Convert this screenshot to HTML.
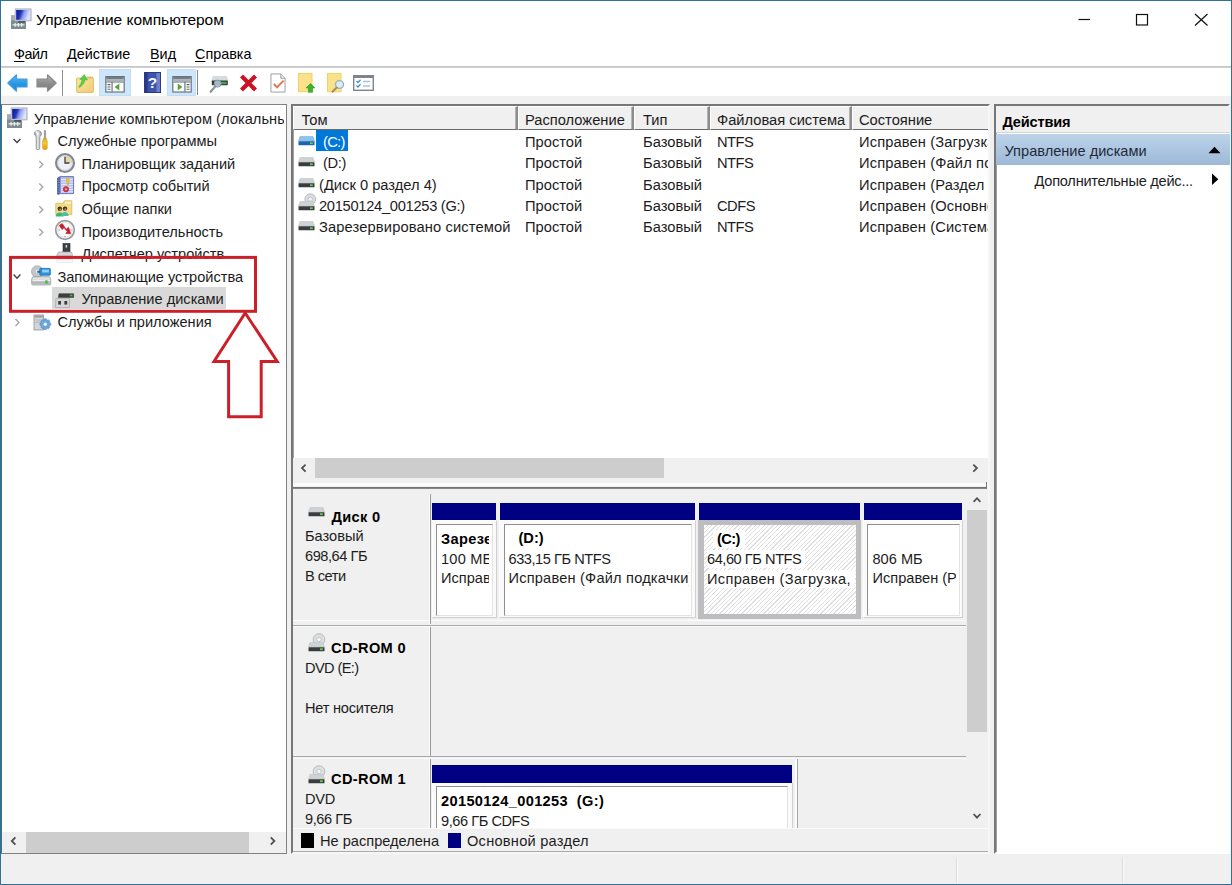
<!DOCTYPE html>
<html lang="ru">
<head>
<meta charset="utf-8">
<title>Управление компьютером</title>
<style>
*{box-sizing:border-box;margin:0;padding:0}
html,body{width:1232px;height:885px;overflow:hidden;background:#fff}
body{font-family:"Liberation Sans",sans-serif;font-size:14.6px;color:#1c1c1c;position:relative}
.abs{position:absolute}
svg{position:absolute;overflow:visible}
.t{position:absolute;white-space:nowrap;line-height:18px;height:18px}
.b{font-weight:bold;color:#000;letter-spacing:.35px}
.n{letter-spacing:-.45px}
#win{position:absolute;left:0;top:0;width:1232px;height:885px;background:#fff;overflow:hidden}
#frame{position:absolute;left:0;top:0;width:1232px;height:885px;border:1px solid #2f7299;z-index:50}
#title{left:36px;top:10.5px;font-size:15.5px;color:#000}
.menu{top:44.8px;color:#000;font-size:14.4px}
.menu u{text-decoration:underline;text-underline-offset:2px}
#menuline{left:1px;top:66px;width:1230px;height:2px;background:linear-gradient(#c2c2c2,#d6d6d6)}
#toolbar{left:1px;top:68px;width:1230px;height:28px;background:#fff}
#client{left:1px;top:96px;width:1230px;height:788px;background:#f0f0f0}
.hl{position:absolute;top:69px;height:27px;background:#cde6f9;border:1px solid #c3def5}
#tbsep{left:62px;top:70px;width:1px;height:26px;background:#8e8e8e}
/* panes */
#tree{left:1px;top:104px;width:286px;height:750px;background:#fff;border:1px solid #828282;border-left-color:#3f6f8c;overflow:hidden}
#main{left:291px;top:104px;width:699px;height:750px;background:#fff;border:2px solid;border-color:#777 #f6f6f6 #f6f6f6 #777;box-shadow:inset 1px 1px 0 #a2a2a2;overflow:hidden}
#actions{left:994px;top:104px;width:235.5px;height:750px;background:#fff;border:2px solid;border-color:#777 #fff #fff #777;box-shadow:inset 1px 1px 0 #a2a2a2;overflow:hidden}

.clip{position:absolute;overflow:hidden}
.pg{position:absolute;width:1232px;height:885px}
.tr{font-size:14.6px}
.sel{position:absolute;background:#d9d9d9}

.hd{position:absolute;top:106px;height:24px;background:#f0f0f0;border-top:1px solid #fff;border-left:1px solid #fff;border-right:2px solid;border-right-color:#8c8c8c;border-bottom:1px solid #6b6b6b;box-shadow:inset -1px 0 0 #b5b5b5}
.hdt{top:111px;font-size:14.7px}
.lv{font-size:14.7px}
.sb{position:absolute;background:#f0f0f0}
.thumb{position:absolute;background:#cdcdcd}

.gp{font-size:14.6px;line-height:18px}
.navy{position:absolute;background:#000082;height:17.5px;top:502.5px}
.cell{position:absolute;background:#fff;border:1px solid;border-color:#8f8f8f #e3e3e3 #e3e3e3 #8f8f8f}
.cellout{position:absolute;background:#fafafa;border:1px solid;border-color:#fff #d0d0d0 #d0d0d0 #fff}
.hline{position:absolute;height:1px;background:#a8a8a8}
.vline{position:absolute;width:1px;background:#9a9a9a}
</style>
</head>
<body>
<div id="win">
<!-- ===== TITLE BAR ===== -->
  <svg id="appicon" style="left:10px;top:8px" width="22" height="22" viewBox="0 0 22 22">
    <defs><linearGradient id="scrG" x1="0" y1="0" x2="1" y2="0.25"><stop offset="0" stop-color="#0a1698"/><stop offset=".38" stop-color="#2334b8"/><stop offset=".62" stop-color="#8e9df0"/><stop offset="1" stop-color="#dfe4fb"/></linearGradient></defs>
    <rect x="1" y="7.5" width="15" height="13.5" fill="#7c8b8e"/>
    <rect x="1" y="7.5" width="15" height="5" fill="#a3aeaa"/>
    <rect x="2.5" y="16" width="12" height="1.6" fill="#cfd6d7"/>
    <rect x="4.5" y="15" width="1.2" height="3.8" fill="#eef1f1"/><rect x="7.8" y="15" width="1.2" height="3.8" fill="#eef1f1"/><rect x="11.1" y="15" width="1.2" height="3.8" fill="#eef1f1"/>
    <rect x="8" y="12.6" width="7" height="1.8" fill="#2c3340"/>
    <rect x="5" y=".8" width="16.2" height="12.2" fill="#c3c8d8" stroke="#aab0c4" stroke-width=".6"/>
    <rect x="6.2" y="2" width="13.8" height="9.8" fill="url(#scrG)"/>
  </svg>
  <div class="t" id="title">Управление компьютером</div>
  <svg style="left:1070px;top:8px" width="150" height="24" viewBox="0 0 150 24">
    <path d="M8.5 11.5 H20" stroke="#111" stroke-width="1.2" fill="none"/>
    <rect x="66.5" y="6.5" width="11" height="10.5" stroke="#111" stroke-width="1.2" fill="none"/>
    <path d="M125 6 L137.5 17.5 M137.5 6 L125 17.5" stroke="#111" stroke-width="1.2" fill="none"/>
  </svg>
<!-- ===== MENU ===== -->
  <div class="t menu" style="left:14px;letter-spacing:-.5px"><u>Ф</u>айл</div>
  <div class="t menu" style="left:67px"><u>Д</u>ействие</div>
  <div class="t menu" style="left:150px"><u>В</u>ид</div>
  <div class="t menu" style="left:195px"><u>С</u>правка</div>
  <div class="abs" id="menuline"></div>
<!-- ===== TOOLBAR ===== -->
  <div class="abs" id="toolbar"></div>
  <div class="abs" id="client"></div>
  <div class="hl" style="left:99px;width:32px"></div>
  <div class="hl" style="left:167px;width:29px"></div>
  <div class="abs" style="left:197px;top:70px;width:1px;height:25px;background:#7f8a93"></div>
  <div class="abs" id="tbsep"></div>

  <!-- back arrow -->
  <svg style="left:7px;top:74px" width="21" height="18" viewBox="0 0 21 18">
    <defs><linearGradient id="gb" x1="0" y1="0" x2="0" y2="1"><stop offset="0" stop-color="#5db8f0"/><stop offset=".5" stop-color="#2a9be8"/><stop offset="1" stop-color="#1c7fd0"/></linearGradient>
    <linearGradient id="gg" x1="0" y1="0" x2="0" y2="1"><stop offset="0" stop-color="#b4b4b4"/><stop offset=".5" stop-color="#8e8e8e"/><stop offset="1" stop-color="#7a7a7a"/></linearGradient></defs>
    <path d="M9.5 0.8 L0.8 9 L9.5 17.2 L9.5 13 L20 13 L20 5 L9.5 5 Z" fill="url(#gb)" stroke="#4a9bdc" stroke-width="1.2" stroke-linejoin="round"/>
  </svg>
  <!-- forward arrow -->
  <svg style="left:36px;top:74px" width="21" height="18" viewBox="0 0 21 18">
    <path d="M11.5 0.8 L20.2 9 L11.5 17.2 L11.5 13 L1 13 L1 5 L11.5 5 Z" fill="url(#gg)" stroke="#8a8a8a" stroke-width="1.2" stroke-linejoin="round"/>
  </svg>
  <!-- folder up -->
  <svg style="left:76px;top:73px" width="19" height="20" viewBox="0 0 19 20">
    <defs><linearGradient id="fg" x1="0" y1="0" x2="1" y2="1"><stop offset="0" stop-color="#f9e79c"/><stop offset="1" stop-color="#f2ca78"/></linearGradient></defs>
    <path d="M10.5 5 L11.8 3.4 H16.3 L17.3 5 Z" fill="#e6c46c"/>
    <rect x=".6" y="5" width="16.8" height="14.4" rx=".8" fill="url(#fg)" stroke="#d9b961" stroke-width=".9"/>
    <path d="M2.6 13.8 C4.6 11.6 5.6 9.2 6.1 6.7 L3.9 6.4 L8.2 1.4 L11.6 7 L9.1 6.8 C8.3 10.2 6.2 12.7 3.7 14.5 Z" fill="#5bcb4d" stroke="#48b03c" stroke-width=".5"/>
  </svg>
  <!-- show/hide tree -->
  <svg style="left:104.8px;top:76px" width="20" height="16.6" viewBox="0 0 20 17">
    <rect x=".6" y=".6" width="18.8" height="15.8" fill="#fff" stroke="#66717d" stroke-width="1.2"/>
    <rect x="1" y="1" width="18" height="2.6" fill="#737d88"/>
    <rect x="1" y="3.6" width="18" height="2.2" fill="#aab3b5"/>
    <rect x="1" y="5.8" width="18" height=".9" fill="#66717d"/>
    <rect x="6.4" y="6" width="1.2" height="10" fill="#66717d"/>
    <path d="M2.3 8.8h3M2.3 11.2h3M2.3 13.6h3" stroke="#56616d" stroke-width="1.1"/>
    <path d="M14.4 7.8 V14.8 L9.6 11.3 Z" fill="#58a43a"/>
  </svg>
  <!-- help -->
  <svg style="left:143.5px;top:72px" width="17" height="21" viewBox="0 0 17 21">
    <rect x=".5" y=".5" width="16" height="20" fill="#3e54ab" stroke="#2a3a86"/>
    <rect x="1" y="1" width="2.6" height="19" fill="#2a3a86"/>
    <rect x="12.5" y="1" width="3.5" height="19" fill="#6d80cb"/>
    <text x="8.6" y="15.8" font-family="Liberation Sans,sans-serif" font-weight="bold" font-size="15.5" fill="#f4f6ff" text-anchor="middle">?</text>
  </svg>
  <!-- show/hide action pane -->
  <svg style="left:172px;top:76px" width="20" height="16.6" viewBox="0 0 20 17">
    <rect x=".6" y=".6" width="18.8" height="15.8" fill="#fff" stroke="#66717d" stroke-width="1.2"/>
    <rect x="1" y="1" width="18" height="2.6" fill="#737d88"/>
    <rect x="1" y="3.6" width="18" height="2.2" fill="#aab3b5"/>
    <rect x="1" y="5.8" width="18" height=".9" fill="#66717d"/>
    <rect x="12.4" y="6" width="1.2" height="10" fill="#66717d"/>
    <path d="M14.7 8.8h3M14.7 11.2h3M14.7 13.6h3" stroke="#56616d" stroke-width="1.1"/>
    <path d="M5.6 7.8 V14.8 L10.4 11.3 Z" fill="#58a43a"/>
  </svg>
  <!-- drive + magnifier -->
  <svg style="left:209px;top:74px" width="21" height="19" viewBox="0 0 21 19">
    <path d="M4 2.4 H17.5 L18.8 6.6 H2.8 Z" fill="#d7dbde" stroke="#c3c8cc" stroke-width=".5"/>
    <rect x="2.8" y="6.6" width="16" height="4.6" rx=".6" fill="#2b3932"/>
    <rect x="11.6" y="7.7" width="6" height="2.5" fill="#44a546"/>
    <circle cx="8.6" cy="9.6" r="3.5" fill="#a9c3d8" fill-opacity=".92" stroke="#8794a0" stroke-width="1"/>
    <path d="M6.3 12.4 L1.6 17.8" stroke="#8a8f94" stroke-width="2.1" stroke-linecap="round"/>
  </svg>
  <!-- red X -->
  <svg style="left:239px;top:74px" width="19" height="18" viewBox="0 0 19 18">
    <path d="M2.5 2 L16.5 16 M16.5 2 L2.5 16" stroke="#cc1220" stroke-width="4.2" stroke-linecap="butt"/>
  </svg>
  <!-- properties doc -->
  <svg style="left:269.5px;top:73px" width="16" height="20" viewBox="0 0 17 21" preserveAspectRatio="none">
    <path d="M1 1 H11.5 L16 5.5 V20 H1 Z" fill="#fff" stroke="#9a9a9a" stroke-width="1"/>
    <path d="M11.5 1 V5.5 H16" fill="#e8e8e8" stroke="#9a9a9a" stroke-width="1"/>
    <path d="M4 11.5 L7.5 15 L14.5 8" fill="none" stroke="#e2785a" stroke-width="2"/>
  </svg>
  <!-- export up -->
  <svg style="left:298px;top:72.8px" width="18" height="20.2" viewBox="0 0 18 21" preserveAspectRatio="none">
    <rect x=".5" y=".5" width="13.5" height="19" fill="#fbe28a" stroke="#f1d16a"/>
    <path d="M12.5 11 L17 15.5 H14.6 V20 H10.4 V15.5 H8 Z" fill="#3ab52c" stroke="#2a9420" stroke-width=".6"/>
  </svg>
  <!-- find -->
  <svg style="left:327px;top:72.8px" width="19" height="20.2" viewBox="0 0 19 21" preserveAspectRatio="none">
    <rect x=".5" y=".5" width="13.5" height="19" fill="#fbe28a" stroke="#f1d16a"/>
    <circle cx="12.5" cy="12" r="4" fill="#d9eef5" stroke="#9ab0bb" stroke-width="1.4"/>
    <path d="M9.8 15 L5.5 19.5" stroke="#a08e66" stroke-width="2" stroke-linecap="round"/>
  </svg>
  <!-- checklist -->
  <svg style="left:353px;top:75px" width="21" height="16" viewBox="0 0 21 16">
    <rect x=".7" y=".7" width="19.6" height="14.6" fill="#fff" stroke="#7e848c" stroke-width="1.4"/>
    <rect x="1" y="1" width="19" height="2" fill="#7e848c"/>
    <path d="M3.5 6 L5 7.5 L7.5 4.8 M3.5 10.5 L5 12 L7.5 9.3" fill="none" stroke="#3a8fd6" stroke-width="1.3"/>
    <path d="M10 6.5 H17 M10 11 H17" stroke="#a7c3e0" stroke-width="1.4"/>
  </svg>

<!-- ===== PANES ===== -->
  <div class="abs" id="tree">
  <!--TREE-->
  </div>
  <div class="abs" id="main">
  <!--MAIN-->
  </div>
  <div class="abs" id="actions">
  </div>

  <div class="clip" style="left:2px;top:105px;width:284px;height:748px"><div class="pg" style="left:-2px;top:-105px">
    <div class="sel" style="left:52px;top:287px;width:174px;height:22px"></div>
    <div class="sb" style="left:2px;top:832px;width:284px;height:21px"></div>
    <div class="thumb" style="left:25.5px;top:832px;width:223px;height:20.5px"></div>
    <svg style="left:5px;top:832px" width="281" height="21" viewBox="0 0 281 21">
      <path d="M10.4 5.4 L6.8 9 L10.4 12.6" fill="none" stroke="#505050" stroke-width="1.8"/>
      <path d="M265.8 5.4 L269.4 9 L265.8 12.6" fill="none" stroke="#505050" stroke-width="1.8"/>
    </svg>
    <!-- row texts -->
    <div class="t tr" style="left:34px;top:109.5px;width:250.2px;overflow:hidden;letter-spacing:.05px">Управление компьютером (локальный)</div>
    <div class="t tr" style="left:57.4px;top:132.1px">Служебные программы</div>
    <div class="t tr" style="left:81.5px;top:154.7px">Планировщик заданий</div>
    <div class="t tr" style="left:81.5px;top:177.3px">Просмотр событий</div>
    <div class="t tr" style="left:81.5px;top:199.9px">Общие папки</div>
    <div class="t tr" style="left:81.5px;top:222.5px">Производительность</div>
    <div class="t tr" style="left:81.5px;top:245.1px">Диспетчер устройств</div>
    <div class="t tr" style="left:57.4px;top:267.7px">Запоминающие устройства</div>
    <div class="t tr" style="left:81.5px;top:290.3px">Управление дисками</div>
    <div class="t tr" style="left:57.4px;top:312.9px">Службы и приложения</div>
    <!-- chevrons -->
    <svg style="left:0;top:0" width="60" height="340" viewBox="0 0 60 340">
      <g fill="none" stroke="#404040" stroke-width="1.4">
        <path d="M13.6 139 L17 142.6 L20.4 139"/>
        <path d="M13.6 274.6 L17 278.2 L20.4 274.6"/>
      </g>
      <g fill="none" stroke="#a6a6a6" stroke-width="1.4">
        <path d="M39.3 161 L42.8 164.5 L39.3 168"/>
        <path d="M39.3 183.6 L42.8 187.1 L39.3 190.6"/>
        <path d="M39.3 206.2 L42.8 209.7 L39.3 213.2"/>
        <path d="M39.3 228.8 L42.8 232.3 L39.3 235.8"/>
        <path d="M15.5 319 L19 322.5 L15.5 326"/>
      </g>
    </svg>
    <!-- root icon: computer management -->
    <svg style="left:6px;top:107px" width="22" height="22" viewBox="0 0 22 22">
    <defs><linearGradient id="scrG2" x1="0" y1="0" x2="1" y2="0.25"><stop offset="0" stop-color="#0a1698"/><stop offset=".38" stop-color="#2334b8"/><stop offset=".62" stop-color="#8e9df0"/><stop offset="1" stop-color="#dfe4fb"/></linearGradient></defs>
    <rect x="1" y="7.5" width="15" height="13.5" fill="#7c8b8e"/>
    <rect x="1" y="7.5" width="15" height="5" fill="#a3aeaa"/>
    <rect x="2.5" y="16" width="12" height="1.6" fill="#cfd6d7"/>
    <rect x="4.5" y="15" width="1.2" height="3.8" fill="#eef1f1"/><rect x="7.8" y="15" width="1.2" height="3.8" fill="#eef1f1"/><rect x="11.1" y="15" width="1.2" height="3.8" fill="#eef1f1"/>
    <rect x="8" y="12.6" width="7" height="1.8" fill="#2c3340"/>
    <rect x="5" y=".8" width="16.2" height="12.2" fill="#c3c8d8" stroke="#aab0c4" stroke-width=".6"/>
    <rect x="6.2" y="2" width="13.8" height="9.8" fill="url(#scrG2)"/>
    </svg>
    <!-- system tools: wrench + screwdriver -->
    <svg style="left:33px;top:130px" width="16" height="21" viewBox="0 0 16 21">
      <defs><linearGradient id="wr" x1="0" y1="0" x2="1" y2="0"><stop offset="0" stop-color="#8d9297"/><stop offset=".45" stop-color="#e4e7e9"/><stop offset="1" stop-color="#9aa39f"/></linearGradient>
      <linearGradient id="sd" x1="0" y1="0" x2="0" y2="1"><stop offset="0" stop-color="#d8b43a"/><stop offset=".45" stop-color="#f3cb2a"/><stop offset="1" stop-color="#e29a14"/></linearGradient></defs>
      <path d="M2.2 1.6 C3.4 .3 6.6 .2 7.9 2 C9 3.6 8.4 5.6 6.9 6.6 L6.7 18.4 C6.7 20.2 3.3 20.2 3.3 18.4 L3.1 6.6 C1.4 5.6 1 3.2 2.2 1.6 Z" fill="url(#wr)" stroke="#878c91" stroke-width=".8"/>
      <path d="M2.6 1.4 L5.2 3.8 L4 5" fill="none" stroke="#fff" stroke-width="1.2"/>
      <path d="M11.4 .4 H12.6 V8.6 H11.4 Z" fill="#8f927f" stroke="#7a7d70" stroke-width=".5"/>
      <path d="M10.4 8.4 H13.4 L14.2 11.5 V18 C14.2 20 9.6 20 9.6 18 V11.5 Z" fill="url(#sd)" stroke="#cf9612" stroke-width=".6"/>
    </svg>
    <!-- task scheduler: clock -->
    <svg style="left:54px;top:152px" width="22" height="22" viewBox="0 0 22 22">
      <circle cx="11" cy="11" r="8.9" fill="#eef1f6" stroke="#85878f" stroke-width="2.3"/>
      <path d="M11 11 L11 3.6 A7.4 7.4 0 0 1 18.4 11 Z" fill="#ead6a2"/>
      <circle cx="11" cy="11" r="7.3" fill="none" stroke="#cfd3da" stroke-width=".9"/>
      <path d="M11 4.8 V11 H15.4" fill="none" stroke="#3e3e46" stroke-width="1.3"/>
    </svg>
    <!-- event viewer -->
    <svg style="left:55.5px;top:176px" width="19" height="19" viewBox="0 0 19 19">
      <path d="M2.2 1.6 L4.2 .6 H17.6 V17.6 L4.2 17.6 L2.2 18.4 Z" fill="#b9c0ee" stroke="#5a6bb0" stroke-width=".9"/>
      <path d="M1 2.2 L4.4 .8 V17.6 L1 18.6 Z" fill="#4f61a6"/>
      <path d="M1 4.2h3.3M1 6.6h3.3M1 9h3.3M1 11.4h3.3M1 13.8h3.3M1 16.2h3.3" stroke="#8a97cf" stroke-width=".7"/>
      <path d="M5 3.5H17M5 6H17M5 8.5H17M5 11H17M5 13.5H17M5 15.8H17" stroke="#e3e7fb" stroke-width="1"/>
      <path d="M10.4 2.2 H13.2 L12.5 8.6 H11.2 Z" fill="#ead22f" stroke="#bda114" stroke-width=".5"/>
      <circle cx="10" cy="13.2" r="2.7" fill="#d8394a" stroke="#a62332" stroke-width=".6"/>
      <circle cx="10" cy="13.2" r="1" fill="#f6b4b9"/>
    </svg>
    <!-- shared folders -->
    <svg style="left:55px;top:200px" width="18" height="19" viewBox="0 0 18 19">
      <path d="M.8 3.3 H8 L9.5 .8 H16.8 V14.6 H.8 Z" fill="#f3db88" stroke="#d9bd62" stroke-width=".9"/>
      <rect x="10.3" y="1.6" width="5.7" height="2.2" fill="#faf0c4"/>
      <circle cx="4.8" cy="8.8" r="2.2" fill="#3b342b"/>
      <circle cx="10" cy="8.6" r="2.2" fill="#3b342b"/>
      <circle cx="5.2" cy="9.4" r="1" fill="#b98f6c"/>
      <circle cx="10.4" cy="9.2" r="1" fill="#b98f6c"/>
      <path d="M.6 16.6 C.6 11.2 8.8 11.2 8.8 16.6 Z" fill="#3cb66f"/>
      <path d="M6.2 16 C6.2 10.8 13.6 10.8 13.6 16 Z" fill="#4bbfae"/>
    </svg>
    <!-- performance -->
    <svg style="left:54px;top:219px" width="22" height="22" viewBox="0 0 22 22">
      <circle cx="11" cy="11" r="9.3" fill="#fbfbfb" stroke="#9b9b9f" stroke-width="1.7"/>
      <circle cx="11" cy="11" r="7.5" fill="none" stroke="#dcdce0" stroke-width=".8"/>
      <path d="M5.2 6.4 L8.2 4.6 L12.2 10.2 L14.6 8.2 L16.8 14.8 L11.8 14.6 L13.2 12.6 L10 8.8 L8 10.6 Z" fill="#cf1f2b" stroke="#a1121c" stroke-width=".5"/>
      <path d="M4.5 11 h1.2 M16.5 11 h1.2 M11 17 v1" stroke="#707078" stroke-width=".9"/>
    </svg>
    <!-- device manager -->
    <svg style="left:55px;top:242px" width="20" height="22" viewBox="0 0 20 22">
      <rect x="8" y="1.5" width="7" height="8.5" fill="#3c3f44" stroke="#26282b" stroke-width=".6"/>
      <rect x="10.6" y="3" width="1.5" height="2.6" fill="#d6d8da"/>
      <path d="M3.5 10 H16.5 L17.6 13.5 H1.8 Z" fill="#d6d9dc" stroke="#9da2a7" stroke-width=".7"/>
      <rect x="1.8" y="13.5" width="15.8" height="7" fill="#eceeef" stroke="#b9bdc1" stroke-width=".7"/>
      <rect x="3" y="16" width="13.4" height="1.6" fill="#e7a5a2"/>
      <rect x="0" y="16.8" width="20" height="6" fill="#fff" fill-opacity=".6"/>
    </svg>
    <!-- storage -->
    <svg style="left:31px;top:264.8px" width="20.4" height="20.6" viewBox="0 0 21 22" preserveAspectRatio="none">
      <ellipse cx="6.5" cy="7" rx="6" ry="6.2" fill="#c2c7c9" stroke="#9aa0a3" stroke-width=".7"/>
      <ellipse cx="6.5" cy="7" rx="2" ry="2.1" fill="#eef0f1" stroke="#a9aeb1" stroke-width=".5"/>
      <rect x="9" y="3.6" width="11" height="7.4" rx="1" fill="#2f8fd9" stroke="#1c6bb0" stroke-width=".7"/>
      <rect x="11.5" y="5" width="7" height="3" fill="#8fd0f6"/>
      <rect x="6.5" y="6.3" width="3" height="2" fill="#215f9c"/>
      <path d="M2 12.5 H19 L20.3 15 V20 C20.3 21 19.5 21.3 19 21.3 H2 C1.2 21.3 .7 21 .7 20 V15 Z" fill="#dfe2e3" stroke="#8f9598" stroke-width=".8"/>
      <rect x="1" y="15" width="19" height="6" rx="1" fill="#b4b9bb"/>
      <rect x="1.4" y="15.3" width="18.2" height="2" fill="#eef0f0"/>
      <rect x="14.6" y="16.4" width="2.6" height="3.6" fill="#56b53e"/>
    </svg>
    <!-- disk management -->
    <svg style="left:55px;top:293px" width="21" height="15" viewBox="0 0 21 15">
      <path d="M4 .7 H18.6 V4.4 H3.4 Z" fill="#3d4041" stroke="#2a2c2d" stroke-width=".5"/>
      <rect x="14.8" y="1.6" width="2.6" height="1.8" fill="#4fb044"/>
      <path d="M1 5.4 H14.4 V14.6 H.4 Z" fill="#d4d6d7" stroke="#9fa3a5" stroke-width=".7"/>
      <rect x="3.2" y="8" width="2.8" height="3.6" fill="#3a3c3d"/>
      <rect x="9.4" y="8" width="2.8" height="3.6" fill="#3a3c3d"/>
    </svg>
    <!-- services and apps -->
    <svg style="left:33px;top:314px" width="20" height="17" viewBox="0 0 20 17">
      <rect x="1" y="1" width="9.5" height="15" fill="#d3d6d8" stroke="#8e9396" stroke-width=".8"/>
      <rect x="1.4" y="1.4" width="8.7" height="2.2" fill="#9ea3a6"/>
      <path d="M2.5 6H9M2.5 8.2H9" stroke="#a9adb0" stroke-width=".8"/>
      <g transform="translate(12.3,10.8)">
        <path d="M-1.1 -6 H1.1 L1.5 -4.3 L3 -5.2 L4.6 -3.6 L3.7 -2.1 L5.4 -1.7 V.5 L3.7 .9 L4.6 2.4 L3 4 L1.5 3.1 L1.1 4.8 H-1.1 L-1.5 3.1 L-3 4 L-4.6 2.4 L-3.7 .9 L-5.4 .5 V-1.7 L-3.7 -2.1 L-4.6 -3.6 L-3 -5.2 L-1.5 -4.3 Z" fill="#6aa6dc" stroke="#4b86bd" stroke-width=".5"/>
        <circle cx="0" cy="-.6" r="1.7" fill="#eaf3fb"/>
      </g>
    </svg>
  </div></div>

  <div class="clip" style="left:293px;top:106px;width:695px;height:746px"><div class="pg" style="left:-293px;top:-106px">
    <!-- header -->
    <div class="hd" style="left:293px;width:224.5px"></div>
    <div class="hd" style="left:517.5px;width:116.5px"></div>
    <div class="hd" style="left:634px;width:76px"></div>
    <div class="hd" style="left:710px;width:141.5px"></div>
    <div class="hd" style="left:851.5px;width:160px"></div>
    <div class="t hdt" style="left:301.5px">Том</div>
    <div class="t hdt" style="left:525px">Расположение</div>
    <div class="t hdt" style="left:643px">Тип</div>
    <div class="t hdt" style="left:717px">Файловая система</div>
    <div class="t hdt" style="left:859px">Состояние</div>
    <!-- selection -->
    <div class="abs" style="left:316px;top:130px;width:32px;height:21px;background:#0078d7"></div>
    <!-- rows -->
    <div class="t lv" style="left:323px;top:133.1px;color:#fff;letter-spacing:-.7px">(C:)</div>
    <div class="t lv" style="left:323px;top:154.4px;letter-spacing:-.35px">(D:)</div>
    <div class="t lv" style="left:319px;top:175.7px">(Диск 0 раздел 4)</div>
    <div class="t lv" style="left:319px;top:197px;letter-spacing:-.3px">20150124_001253 (G:)</div>
    <div class="t lv" style="left:319px;top:218.3px;letter-spacing:.13px">Зарезервировано системой</div>
    <div class="t lv" style="left:525px;top:133.1px">Простой</div>
    <div class="t lv" style="left:525px;top:154.4px">Простой</div>
    <div class="t lv" style="left:525px;top:175.7px">Простой</div>
    <div class="t lv" style="left:525px;top:197px">Простой</div>
    <div class="t lv" style="left:525px;top:218.3px">Простой</div>
    <div class="t lv" style="left:643px;top:133.1px">Базовый</div>
    <div class="t lv" style="left:643px;top:154.4px">Базовый</div>
    <div class="t lv" style="left:643px;top:175.7px">Базовый</div>
    <div class="t lv" style="left:643px;top:197px">Базовый</div>
    <div class="t lv" style="left:643px;top:218.3px">Базовый</div>
    <div class="t lv" style="left:717px;top:133.1px;letter-spacing:-.5px">NTFS</div>
    <div class="t lv" style="left:717px;top:154.4px;letter-spacing:-.5px">NTFS</div>
    <div class="t lv" style="left:717px;top:197px;letter-spacing:-.5px">CDFS</div>
    <div class="t lv" style="left:717px;top:218.3px;letter-spacing:-.5px">NTFS</div>
    <div class="t lv" style="left:859px;top:133.1px;letter-spacing:.12px">Исправен (Загрузка, Файл подкачки)</div>
    <div class="t lv" style="left:859px;top:154.4px;letter-spacing:.12px">Исправен (Файл подкачки)</div>
    <div class="t lv" style="left:859px;top:175.7px;letter-spacing:.12px">Исправен (Раздел</div>
    <div class="t lv" style="left:859px;top:197px;letter-spacing:.12px">Исправен (Основной раздел)</div>
    <div class="t lv" style="left:859px;top:218.3px;letter-spacing:.12px">Исправен (Система, Активен)</div>
    <svg style="left:297.8px;top:135.5px" width="17" height="10" viewBox="0 0 17 10"><path d="M2 .5 H15 L16.5 5.2 H.5 Z" fill="#8ec3ec" stroke="#63a9e0" stroke-width=".5"/><rect x=".5" y="5.2" width="16" height="4.1" rx=".5" fill="#1f63ab"/><rect x="12" y="6.3" width="2.8" height="1.8" fill="#5fd04a"/></svg>
    <svg style="left:297.8px;top:156.9px" width="17" height="10" viewBox="0 0 17 10"><path d="M2 .5 H15 L16.5 5.2 H.5 Z" fill="#cfd2d4" stroke="#b9bdbf" stroke-width=".5"/><rect x=".5" y="5.2" width="16" height="4.1" rx=".5" fill="#393d3f"/><rect x="12" y="6.3" width="2.8" height="1.8" fill="#5fd04a"/></svg>
    <svg style="left:297.8px;top:178.2px" width="17" height="10" viewBox="0 0 17 10"><path d="M2 .5 H15 L16.5 5.2 H.5 Z" fill="#cfd2d4" stroke="#b9bdbf" stroke-width=".5"/><rect x=".5" y="5.2" width="16" height="4.1" rx=".5" fill="#393d3f"/><rect x="12" y="6.3" width="2.8" height="1.8" fill="#5fd04a"/></svg>
    <svg style="left:297.8px;top:200.6px" width="17" height="10" viewBox="0 0 17 10"><circle cx="12.3" cy="-1.8" r="5.4" fill="#d9dcde" stroke="#a9aeb1" stroke-width=".8"/><circle cx="12.3" cy="-1.8" r="2" fill="#f6f7f8" stroke="#aeb3b6" stroke-width=".6"/><path d="M2 .5 H15 L16.5 5.2 H.5 Z" fill="#cfd2d4" stroke="#b9bdbf" stroke-width=".5"/><rect x=".5" y="5.2" width="16" height="4.1" rx=".5" fill="#393d3f"/><rect x="12" y="6.3" width="2.8" height="1.8" fill="#5fd04a"/></svg>
    <svg style="left:297.8px;top:220.8px" width="17" height="10" viewBox="0 0 17 10"><path d="M2 .5 H15 L16.5 5.2 H.5 Z" fill="#cfd2d4" stroke="#b9bdbf" stroke-width=".5"/><rect x=".5" y="5.2" width="16" height="4.1" rx=".5" fill="#393d3f"/><rect x="12" y="6.3" width="2.8" height="1.8" fill="#5fd04a"/></svg>
    <!-- h scrollbar -->
    <div class="sb" style="left:293px;top:458px;width:695px;height:24px"></div>
    <div class="thumb" style="left:315px;top:458px;width:349px;height:20px"></div>
    <svg style="left:293px;top:457px" width="695" height="23" viewBox="0 0 695 23">
      <path d="M12.6 7.6 L9 11.1 L12.6 14.6" fill="none" stroke="#505050" stroke-width="1.8"/>
      <path d="M680.3 7.6 L683.9 11.1 L680.3 14.6" fill="none" stroke="#505050" stroke-width="1.8"/>
    </svg>

    <!-- splitter + graphical pane -->
    <div class="abs" style="left:293px;top:482px;width:695px;height:370px;background:#f0f0f0"></div>
    <div class="abs" style="left:293px;top:483px;width:695px;height:3px;background:#fbfbfb"></div>
    <div class="abs" style="left:293px;top:486.6px;width:694px;height:2.2px;background:linear-gradient(#6a6a6a,#8f8f8f)"></div>
    <div class="abs" style="left:985.5px;top:481.5px;width:1.5px;height:6px;background:#7a7a7a"></div>
    <!-- v scrollbar -->
    <div class="sb" style="left:966px;top:489px;width:22px;height:340px;background:#f0f0f0"></div>
    <div class="thumb" style="left:967px;top:510.3px;width:19.6px;height:221.6px"></div>
    <svg style="left:966px;top:489px" width="22" height="340" viewBox="0 0 22 340">
      <path d="M7.6 12.8 L11 9.2 L14.4 12.8" fill="none" stroke="#505050" stroke-width="1.8"/>
      <path d="M7.6 325 L11 328.6 L14.4 325" fill="none" stroke="#505050" stroke-width="1.8"/>
    </svg>
    <!-- row separators -->
    <div class="hline" style="left:293px;top:620px;width:673px;background:#fdfdfd"></div>
    <div class="hline" style="left:293px;top:624.5px;width:673px"></div>
    <div class="hline" style="left:293px;top:626px;width:673px;background:#fbfbfb"></div>
    <div class="hline" style="left:293px;top:756px;width:673px"></div>
    <div class="hline" style="left:293px;top:757.5px;width:673px;background:#fbfbfb"></div>
    <div class="vline" style="left:430px;top:494px;height:130px"></div>
    <div class="vline" style="left:429px;top:494px;height:130px;background:#fbfbfb"></div>
    <div class="vline" style="left:430px;top:627px;height:129px"></div>
    <div class="vline" style="left:429px;top:627px;height:129px;background:#fbfbfb"></div>
    <div class="vline" style="left:430px;top:759px;height:70px"></div>
    <div class="vline" style="left:429px;top:759px;height:70px;background:#fbfbfb"></div>
    <!-- Disk 0 label -->
    <div class="t gp b" style="left:331.5px;top:508px">Диск 0</div>
    <div class="t gp" style="left:305px;top:527.2px">Базовый</div>
    <div class="t gp n" style="left:305px;top:547.4px">698,64 ГБ</div>
    <div class="t gp" style="left:305px;top:567px;letter-spacing:-.5px">В сети</div>
    <!-- Disk 0 partitions -->
    <div class="cellout" style="left:431.5px;top:520px;width:65.5px;height:98px"></div>
    <div class="cellout" style="left:499px;top:520px;width:197px;height:98px"></div>
    <div class="cellout" style="left:862.5px;top:520px;width:100px;height:98px"></div>
    <div class="navy" style="left:432px;width:64px"></div>
    <div class="navy" style="left:500px;width:195px"></div>
    <div class="navy" style="left:699px;width:161px"></div>
    <div class="navy" style="left:863.5px;width:98px"></div>
    <div class="cell" style="left:436px;top:524px;width:57px;height:92px"></div>
    <div class="cell" style="left:504px;top:524px;width:188px;height:92px"></div>
    <div class="abs" id="csel" style="left:697.5px;top:520.2px;width:163.6px;height:98.8px;background:#bdbdbf"></div>
    <div class="abs" id="chatch" style="left:703.5px;top:525px;width:152.5px;height:88.8px;background:#fff repeating-linear-gradient(135deg,#fff 0,#fff 2.2px,#dedede 2.2px,#dedede 3.1px)"></div>
    <div class="cell" style="left:867px;top:524px;width:92.5px;height:92px"></div>
    <div class="clip" style="left:437px;top:525px;width:51.6px;height:90px"><div class="pg" style="left:-437px;top:-525px">
      <div class="t gp b" style="left:441px;top:530px">Зарезервировано</div>
      <div class="t gp" style="left:441px;top:549.8px;letter-spacing:.2px">100 МБ NTFS</div>
      <div class="t gp" style="left:441px;top:569.2px">Исправен</div>
    </div></div>
    <div class="clip" style="left:505px;top:525px;width:184px;height:90px"><div class="pg" style="left:-505px;top:-525px">
      <div class="t gp b" style="left:518.5px;top:529.4px;letter-spacing:0">(D:)</div>
      <div class="t gp n" style="left:508.5px;top:549.8px">633,15 ГБ NTFS</div>
      <div class="t gp" style="left:508.5px;top:569.2px;letter-spacing:.2px">Исправен (Файл подкачки)</div>
    </div></div>
    <div class="clip" style="left:704px;top:525.5px;width:151px;height:88px"><div class="pg" style="left:-704px;top:-525.5px">
      <div class="t gp b" style="left:713px;top:530px;background:#fff;padding:0 5px 0 4px;letter-spacing:-.6px">(C:)</div>
      <div class="t gp n" style="left:707px;top:549.8px;background:#fff;padding-right:4px">64,60 ГБ NTFS</div>
      <div class="t gp" style="left:707px;top:569.6px;background:#fff;padding-right:4px;letter-spacing:.32px">Исправен (Загрузка, Файл подкачки)</div>
    </div></div>
    <div class="clip" style="left:868px;top:525px;width:87.5px;height:90px"><div class="pg" style="left:-868px;top:-525px">
      <div class="t gp" style="left:872.5px;top:549.8px">806 МБ</div>
      <div class="t gp" style="left:872.5px;top:569.2px">Исправен (Раздел)</div>
    </div></div>
    <!-- CD-ROM 0 -->
    <div class="t gp b" style="left:331px;top:638.5px">CD-ROM 0</div>
    <div class="t gp" style="left:305px;top:658.8px;letter-spacing:-.6px">DVD (E:)</div>
    <div class="t gp" style="left:305px;top:698.8px;letter-spacing:-.22px">Нет носителя</div>
    <!-- CD-ROM 1 -->
    <div class="t gp b" style="left:331px;top:770.4px">CD-ROM 1</div>
    <div class="t gp" style="left:305px;top:790px;letter-spacing:-.3px">DVD</div>
    <div class="t gp n" style="left:305px;top:809.7px">9,66 ГБ</div>
    <div class="cellout" style="left:431.5px;top:782px;width:361px;height:60px"></div>
    <div class="navy" style="left:432px;top:765px;width:359.5px"></div>
    <div class="cell" style="left:436px;top:786px;width:352px;height:60px"></div>
    <div class="t gp b" style="left:441px;top:792.4px">20150124_001253&nbsp; (G:)</div>
    <div class="t gp n" style="left:441px;top:812px">9,66 ГБ CDFS</div>
    <div class="vline" style="left:796.5px;top:759px;height:69px;background:#a6a6a6"></div>
    <div class="vline" style="left:795px;top:759px;height:69px;width:1.5px;background:#fbfbfb"></div>
    <div class="vline" style="left:986.3px;top:828px;height:24px;background:#b2b2b2"></div>
    <!-- legend -->
    <div class="abs" style="left:293px;top:828px;width:695px;height:24px;background:#f0f0f0"></div>
    <div class="abs" style="left:300.5px;top:833px;width:13px;height:14.5px;background:#000"></div>
    <div class="abs" style="left:448px;top:833px;width:12.5px;height:14.5px;background:#000082"></div>
    <div class="abs" style="left:293px;top:850.6px;width:695px;height:1.6px;background:#ababab"></div>
    <div class="abs" style="left:293px;top:828px;width:695px;height:1px;background:#fafafa"></div>
    <div class="t gp" style="left:320px;top:832px">Не распределена</div>
    <div class="t gp" style="left:467px;top:832px;letter-spacing:.25px">Основной раздел</div>
    <svg style="left:307.5px;top:507.0px" width="17" height="10" viewBox="0 0 17 10"><path d="M2 .5 H15 L16.5 5.2 H.5 Z" fill="#cfd2d4" stroke="#b9bdbf" stroke-width=".5"/><rect x=".5" y="5.2" width="16" height="4.1" rx=".5" fill="#393d3f"/><rect x="12" y="6.3" width="2.8" height="1.8" fill="#5fd04a"/></svg>
    <svg style="left:307.5px;top:641.5px" width="17" height="10" viewBox="0 0 17 10"><circle cx="11" cy="-2.5" r="5.8" fill="#dcdfe1" stroke="#a9aeb1" stroke-width=".8"/><circle cx="11" cy="-2.5" r="2.1" fill="#f6f7f8" stroke="#aeb3b6" stroke-width=".6"/><path d="M2 .5 H15 L16.5 5.2 H.5 Z" fill="#cfd2d4" stroke="#b9bdbf" stroke-width=".5"/><rect x=".5" y="5.2" width="16" height="4.1" rx=".5" fill="#393d3f"/><rect x="12" y="6.3" width="2.8" height="1.8" fill="#5fd04a"/></svg>
    <svg style="left:307.5px;top:773.5px" width="17" height="10" viewBox="0 0 17 10"><circle cx="11" cy="-2.5" r="5.8" fill="#dcdfe1" stroke="#a9aeb1" stroke-width=".8"/><circle cx="11" cy="-2.5" r="2.1" fill="#f6f7f8" stroke="#aeb3b6" stroke-width=".6"/><path d="M2 .5 H15 L16.5 5.2 H.5 Z" fill="#cfd2d4" stroke="#b9bdbf" stroke-width=".5"/><rect x=".5" y="5.2" width="16" height="4.1" rx=".5" fill="#393d3f"/><rect x="12" y="6.3" width="2.8" height="1.8" fill="#5fd04a"/></svg>

  </div></div>

  <div class="abs" style="left:996px;top:106px;width:233.5px;height:26.5px;background:#f0f0f0;border-bottom:1px solid #d5d5d5"></div>
  <div class="t b" style="left:1002.5px;top:112.6px;font-size:14.6px;letter-spacing:-.2px">Действия</div>
  <div class="abs" style="left:996px;top:133.5px;width:233.5px;height:31px;background:linear-gradient(#bdd3eb,#9db8d6)"></div>
  <div class="t" style="left:1004.5px;top:142px;font-size:14.6px;color:#1e2a3a">Управление дисками</div>
  <svg style="left:1200px;top:140px" width="30" height="50" viewBox="0 0 30 50">
    <path d="M8.5 13.2 L14.5 6.8 L20.5 13.2 Z" fill="#000"/>
    <path d="M12 33.4 L18.3 39.2 L12 45 Z" fill="#000"/>
  </svg>
  <div class="t" style="left:1034.5px;top:171.8px;font-size:14.6px;letter-spacing:-.25px">Дополнительные дейс...</div>

  <div class="abs" style="left:956px;top:857px;width:1px;height:26px;background:#dcdcdc"></div>
  <div class="abs" style="left:957px;top:857px;width:1px;height:26px;background:#fafafa"></div>
  <div class="abs" style="left:1122px;top:857px;width:1px;height:26px;background:#dcdcdc"></div>
  <div class="abs" style="left:1123px;top:857px;width:1px;height:26px;background:#fafafa"></div>


  <svg style="left:0;top:0;z-index:40" width="1232" height="885" viewBox="0 0 1232 885">
    <rect x="10.5" y="257.4" width="245" height="53.9" fill="none" stroke="#cb2029" stroke-width="3"/>
    <path d="M245.2 313 L277.2 361.5 L261.2 361.5 L261.2 416.8 L228.6 416.8 L228.6 361.5 L214 361.5 Z" fill="#fff" stroke="#cb2029" stroke-width="3" stroke-linejoin="miter"/>
  </svg>

  <div id="frame"></div>
</div>
</body>
</html>
